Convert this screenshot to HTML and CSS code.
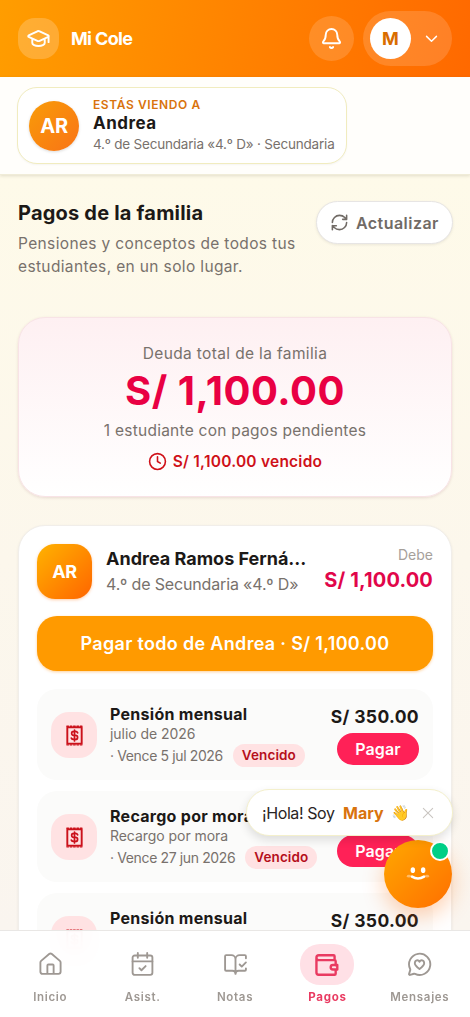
FILE: index.html
```html
<!DOCTYPE html>
<html lang="es">
<head>
<meta charset="utf-8">
<meta name="viewport" content="width=device-width, initial-scale=1">
<title>Mi Cole – Pagos</title>
<link rel="stylesheet" href="styles.css">
</head>
<body>
<svg width="0" height="0" class="defs" aria-hidden="true">
  <symbol id="receipt" viewBox="0 0 24 24">
    <path d="M4.500 3.500h15v17h-15z" fill="none" stroke="currentColor" stroke-width="2"/>
    <path d="M4 2.300h16M4 21.700h16" fill="none" stroke="currentColor" stroke-width="1.400" stroke-dasharray="1.800 1.700"/>
    <path d="M15.300 9.200c-.4-.9-1.300-1.400-2.300-1.400h-1.900a2 2 0 0 0 0 4.100h2a2.100 2.100 0 0 1 0 4.200h-2c-1.100 0-2-.5-2.400-1.400M12 6.300v11.400" fill="none" stroke="currentColor" stroke-width="1.800" stroke-linecap="round"/>
  </symbol>
</svg>
<div class="app">
  <header class="topbar">
    <div class="brand-mark">
      <svg width="23" height="23" viewBox="0 0 24 24"><path d="M10.800 4.500 1.800 8.800a.9.9 0 0 0 0 1.600L10.800 14.500c.8.35 1.600.35 2.400 0L22.200 10.400a.9.9 0 0 0 0-1.600L13.200 4.500a3 3 0 0 0-2.400 0M22.500 9.800v6M5.500 12.500v4.200c0 1.700 2.900 3.100 6.500 3.100s6.500-1.400 6.500-3.100v-4.200"/></svg>
    </div>
    <span class="brand-name">Mi Cole</span>
    <div class="bell">
      <svg width="23" height="23" viewBox="0 0 24 24"><path d="M3.300 15.300A1 1 0 0 0 4 17h16a1 1 0 0 0 .7-1.700C19.400 14 18 12.500 18 8A6 6 0 0 0 6 8c0 4.500-1.400 6-2.700 7.300M10.300 21a2 2 0 0 0 3.400 0"/></svg>
    </div>
    <div class="account">
      <span class="account-avatar">M</span>
      <svg width="17" height="17" viewBox="0 0 24 24"><path d="m5 9 7 7 7-7"/></svg>
    </div>
  </header>

  <section class="viewing">
    <div class="student-chip">
      <span class="chip-avatar">AR</span>
      <div class="chip-text">
        <span class="chip-label">ESTÁS VIENDO A</span>
        <span class="chip-name">Andrea</span>
        <span class="chip-grade">4.º de Secundaria «4.º D» · Secundaria</span>
      </div>
    </div>
  </section>

  <main class="content">
    <div class="page-head">
      <div>
        <h1>Pagos de la familia</h1>
        <p class="intro">Pensiones y conceptos de todos tus<br>estudiantes, en un solo lugar.</p>
      </div>
      <button class="refresh">
        <svg width="19" height="19" viewBox="0 0 24 24"><path d="M3 12a9 9 0 0 1 9-9 9.750 9.750 0 0 1 6.740 2.740L21 8M21 3v5h-5M21 12a9 9 0 0 1-9 9 9.750 9.750 0 0 1-6.740-2.740L3 16M8 16H3v5"/></svg>
        <span>Actualizar</span>
      </button>
    </div>

    <section class="debt">
      <span class="debt-label">Deuda total de la familia</span>
      <span class="debt-total">S/ 1,100.00</span>
      <span class="debt-note">1 estudiante con pagos pendientes</span>
      <span class="debt-due">
        <svg width="19" height="19" viewBox="0 0 24 24"><circle cx="12" cy="12" r="10"/><path d="M12 6v6l3.500 2"/></svg>
        <span>S/ 1,100.00 vencido</span>
      </span>
    </section>

    <section class="student">
      <div class="student-head">
        <span class="student-avatar">AR</span>
        <div class="student-info">
          <span class="student-name">Andrea Ramos Ferná…</span>
          <span class="student-grade">4.º de Secundaria «4.º D»</span>
        </div>
        <div class="owed">
          <span class="owed-label">Debe</span>
          <span class="owed-total">S/ 1,100.00</span>
        </div>
      </div>
      <button class="pay-all"><span>Pagar todo de Andrea · S/ 1,100.00</span></button>

      <article class="fee">
        <span class="fee-icon"><svg width="23" height="23"><use href="#receipt"/></svg></span>
        <div class="fee-info">
          <span class="fee-name">Pensión mensual</span>
          <span class="fee-line">julio de 2026</span>
          <div class="fee-due"><span class="fee-line">· Vence 5 jul 2026</span><span class="badge">Vencido</span></div>
        </div>
        <div class="fee-side"><span class="fee-amount">S/ 350.00</span><button class="pay">Pagar</button></div>
      </article>
      <article class="fee">
        <span class="fee-icon"><svg width="23" height="23"><use href="#receipt"/></svg></span>
        <div class="fee-info">
          <span class="fee-name">Recargo por mora</span>
          <span class="fee-line">Recargo por mora</span>
          <div class="fee-due"><span class="fee-line">· Vence 27 jun 2026</span><span class="badge">Vencido</span></div>
        </div>
        <div class="fee-side"><span class="fee-amount"></span><button class="pay">Pagar</button></div>
      </article>
      <article class="fee">
        <span class="fee-icon"><svg width="23" height="23"><use href="#receipt"/></svg></span>
        <div class="fee-info">
          <span class="fee-name">Pensión mensual</span>
        </div>
        <div class="fee-side"><span class="fee-amount">S/ 350.00</span></div>
      </article>
    </section>
  </main>

  <div class="bot">
    <svg width="24" height="16" viewBox="0 0 28 18">
      <ellipse cx="3.500" cy="11.500" rx="2.500" ry="1.700" fill="#fff" opacity=".4"/><ellipse cx="24.500" cy="11.500" rx="2.500" ry="1.700" fill="#fff" opacity=".4"/>
      <ellipse cx="8" cy="4.500" rx="2.600" ry="3.300" fill="#fff"/><ellipse cx="20" cy="4.500" rx="2.600" ry="3.300" fill="#fff"/>
      <path d="M7 12q7 4.500 14 0" fill="none" stroke="#fff" stroke-width="3" stroke-linecap="round"/>
    </svg>
    <span class="online"></span>
  </div>
  <div class="greeting">
    <span class="hello">¡Hola! Soy</span><strong>Mary</strong><span class="wave">👋</span>
    <svg width="14" height="14" viewBox="0 0 24 24"><path d="M4 4l16 16M20 4 4 20"/></svg>
  </div>

  <nav class="tabs">
    <a class="tab"><span class="tab-icon"><svg width="25" height="25" viewBox="0 0 24 24"><path d="M15 21v-8a1 1 0 0 0-1-1h-4a1 1 0 0 0-1 1v8M2.300 10a2 2 0 0 1 .7-1.500l7.700-6.500a2 2 0 0 1 2.600 0L21 8.500a2 2 0 0 1 .7 1.500v9a2 2 0 0 1-2 2H4.300a2 2 0 0 1-2-2z"/></svg></span><span class="tab-label">Inicio</span></a>
    <a class="tab"><span class="tab-icon"><svg width="25" height="25" viewBox="0 0 24 24"><rect x="2.500" y="3.300" width="19" height="18.700" rx="2"/><path d="M7.500 1v4.500M16.500 1v4.500M2.500 9h19M9 15.500l2 2 4-4"/></svg></span><span class="tab-label">Asist.</span></a>
    <a class="tab"><span class="tab-icon"><svg width="25" height="25" viewBox="0 0 24 24"><path d="M12 21V7M16 12l2 2 4-4M22 6V4a1 1 0 0 0-1-1h-5a4 4 0 0 0-4 4 4 4 0 0 0-4-4H3a1 1 0 0 0-1 1v13a1 1 0 0 0 1 1h6a3 3 0 0 1 3 3 3 3 0 0 1 3-3h6a1 1 0 0 0 1-1v-1.300"/></svg></span><span class="tab-label">Notas</span></a>
    <a class="tab active"><span class="tab-icon"><svg width="26" height="26" viewBox="0 0 24 24"><path d="M19 7.500V4a1 1 0 0 0-1-1H4.500a2.250 2.250 0 0 0 0 4.500H19a1 1 0 0 1 1 1v3.700M2.250 5v14a2 2 0 0 0 2 2H19a1 1 0 0 0 1-1v-3.700M21.500 12h-4a2.100 2.100 0 0 0 0 4.200h4z"/></svg></span><span class="tab-label">Pagos</span></a>
    <a class="tab"><span class="tab-icon"><svg width="25" height="25" viewBox="0 0 24 24"><path d="M3 16.300a1.500 1.500 0 0 1 .1 1.100L2 21a.8.8 0 0 0 1 1l3.700-1.100a1.500 1.500 0 0 1 1 .1A10.200 10.200 0 1 0 3 16.300"/><path d="M7.500 10.800c0-3.200 3.200-3.700 4.500-1.500 1.300-2.200 4.500-1.700 4.500 1.500 0 1.900-2.100 3.700-4.500 5.500-2.400-1.800-4.500-3.600-4.500-5.500z"/></svg></span><span class="tab-label">Mensajes</span></a>
  </nav>
</div>
</body>
</html>
```
FILE: styles.css
```css
* { box-sizing: border-box; }
body { margin: 0; font-family: Inter, "Open Sans", sans-serif; color: #1c1917; }
.defs { position: absolute; }
button { font: inherit; border: 0; padding: 0; }
svg { flex: none; fill: none; stroke: currentColor; stroke-width: 2; stroke-linecap: round; stroke-linejoin: round; }
span { white-space: nowrap; }

.app {
  position: relative; width: 470px; height: 1017px; overflow: hidden;
  background: linear-gradient(180deg, #fefae9 175px, #fcf7ec 560px, #faf5ef 930px);
}

.topbar {
  display: flex; align-items: center; height: 77px; padding: 0 18px; color: #fff;
  background: linear-gradient(100deg, #ff9d00, #ff6900);
}
.brand-mark { display: grid; place-items: center; width: 41px; height: 41px; border-radius: 17px; background: rgba(255,255,255,.2); }
.brand-name { margin-left: 12px; font-size: 18px; font-weight: 700; letter-spacing: -.65px; }
.bell { display: grid; place-items: center; width: 45px; height: 45px; margin-left: auto; border-radius: 50%; background: rgba(255,255,255,.15); }
.account { display: flex; align-items: center; width: 89px; height: 55px; margin-left: 9px; padding: 0 12px 0 7px; border-radius: 28px; background: rgba(255,255,255,.15); justify-content: space-between; }
.account-avatar { display: grid; place-items: center; width: 41px; height: 41px; border-radius: 50%; background: #fff; color: #d96d00; font-size: 18px; font-weight: 700; }

.viewing { height: 98px; padding: 10px 17px; background: #fffefb; border-bottom: 1px solid #f0ecd8; box-shadow: 0 1px 3px rgba(70,60,20,.15); }
.student-chip { display: flex; align-items: center; width: 330px; height: 77px; padding-left: 11px; border: 1.5px solid #f1ecbf; border-radius: 20px; background: #fff; box-shadow: 0 1px 2px rgba(0,0,0,.04); }
.chip-avatar { display: grid; place-items: center; width: 50px; height: 50px; border-radius: 50%; color: #fff; font-size: 20px; font-weight: 700; letter-spacing: -.3px; background: linear-gradient(135deg, #f99c08, #f97316); box-shadow: 0 1px 3px rgba(0,0,0,.15); }
.chip-text { display: flex; flex-direction: column; margin-left: 14px; }
.chip-label { font-size: 12px; line-height: 16px; font-weight: 600; letter-spacing: .6px; color: #d9730d; }
.chip-name { font-size: 17px; line-height: 21px; font-weight: 700; letter-spacing: .5px; }
.chip-grade { font-size: 13.500px; line-height: 20px; letter-spacing: -.2px; color: #78716c; }

.content { padding: 26px 18px 0; }
.page-head { display: flex; justify-content: space-between; height: 116px; }
h1 { margin: 0; font-size: 20px; line-height: 25px; font-weight: 700; letter-spacing: .2px; white-space: nowrap; }
.intro { margin: 6px 0 0; font-size: 15.500px; line-height: 23px; letter-spacing: .36px; color: #78716c; white-space: nowrap; }
.refresh { display: flex; align-items: center; gap: 7px; width: 137px; height: 43px; margin-right: -1px; padding-left: 13px; border: 1px solid #e7e5e4; border-radius: 22px; background: #fff; color: #716b66; font-size: 16px; font-weight: 600; letter-spacing: .45px; box-shadow: 0 1px 3px rgba(0,0,0,.08); }

.debt { display: flex; flex-direction: column; align-items: center; height: 180px; padding-top: 24px; border: 1px solid #f8e3e6; border-radius: 27px; background: linear-gradient(180deg, #fef0f2, #fff); box-shadow: 0 1px 3px rgba(90,20,30,.12); }
.debt-label { font-size: 15.500px; line-height: 23px; letter-spacing: .36px; color: #78716c; }
.debt-total { font-size: 40px; line-height: 52px; font-weight: 700; letter-spacing: .5px; color: #e90043; }
.debt-note { font-size: 15.500px; line-height: 27px; letter-spacing: .25px; color: #78716c; }
.debt-due { display: flex; align-items: center; gap: 6px; margin-top: 4px; font-size: 15.500px; line-height: 27px; font-weight: 600; letter-spacing: .23px; color: #cf1018; }

.student { height: 600px; margin-top: 28px; padding: 18px 18px 0; border: 1px solid #f1eeea; border-radius: 27px; background: #fff; box-shadow: 0 1px 3px rgba(0,0,0,.07); }
.student-head { display: flex; height: 54px; }
.student-avatar { display: grid; place-items: center; width: 55px; height: 55px; border-radius: 18px; color: #fff; font-size: 18px; font-weight: 700; letter-spacing: -.5px; background: linear-gradient(135deg, #ffb300, #ff6500); box-shadow: 0 1px 3px rgba(255,110,0,.35); }
.student-info { display: flex; flex-direction: column; margin-left: 14px; padding-top: 2px; }
.student-name { font-size: 18px; line-height: 26px; font-weight: 700; }
.student-grade { font-size: 16px; line-height: 25px; letter-spacing: -.15px; color: #78716c; }
.owed { display: flex; flex-direction: column; align-items: flex-end; margin-left: auto; margin-top: -1px; }
.owed-label { font-size: 14px; line-height: 23px; color: #a6a09b; }
.owed-total { font-size: 20px; line-height: 28px; font-weight: 700; letter-spacing: .15px; color: #e1064a; }
.pay-all { display: grid; place-items: center; width: 396px; height: 55px; margin-top: 18px; border-radius: 20px; background: #ff9a00; color: #fff; font-size: 18px; font-weight: 600; letter-spacing: .32px; box-shadow: 0 1px 3px rgba(255,140,0,.4); }

.fee { display: flex; width: 396px; height: 91px; margin-top: 18px; padding: 0 14px; border-radius: 20px; background: #fbfbfa; }
.fee + .fee { margin-top: 11px; }
.fee-icon { display: grid; place-items: center; width: 46px; height: 46px; margin-top: 23px; border-radius: 18px; background: #ffe2e3; color: #cb111b; }
.fee-info { display: flex; flex-direction: column; margin-left: 13px; padding-top: 15px; }
.fee-name { font-size: 16px; line-height: 20px; font-weight: 700; letter-spacing: .28px; }
.fee-line { font-size: 14px; line-height: 20px; letter-spacing: -.05px; color: #78716c; }
.fee-due { display: flex; align-items: center; gap: 10px; }
.fee-due .fee-line { letter-spacing: -.37px; }
.badge { height: 23px; padding: 0 9px; border-radius: 12px; background: #ffe2e3; color: #b50f1b; font-size: 13.500px; line-height: 23px; font-weight: 600; letter-spacing: .1px; }
.fee-side { display: flex; flex-direction: column; align-items: flex-end; margin-left: auto; padding-top: 16px; }
.fee-amount { min-height: 24px; font-size: 17.500px; line-height: 24px; font-weight: 700; letter-spacing: .35px; }
.pay { width: 82px; height: 32px; margin-top: 4px; border-radius: 16px; background: #ff2157; color: #fff; font-size: 16px; font-weight: 600; letter-spacing: .1px; }

.tabs { position: absolute; left: 0; right: 0; bottom: 0; height: 87px; display: flex; padding: 13px 4px 0; background: rgba(255,255,255,.95); backdrop-filter: blur(14px); border-top: 1px solid #e9e7e5; }
.tab { display: flex; flex: 1; flex-direction: column; align-items: center; color: #9e9893; }
.tab-icon { display: grid; place-items: center; width: 54px; height: 41px; border-radius: 20px; }
.tab-icon svg { stroke-width: 1.800; }
.tab-label { margin-top: 4px; font-size: 11.500px; line-height: 16px; font-weight: 600; letter-spacing: .7px; }
.active { color: #e93a61; }
.active .tab-icon { background: #ffe0e6; }
.active .tab-icon svg { stroke-width: 2.200; }
.active .tab-label { font-weight: 700; }

.greeting { position: absolute; left: 246px; top: 789px; display: flex; align-items: center; width: 207px; height: 47px; padding-left: 15px; border: 1px solid #f4f0cc; border-radius: 23px; background: #fff; font-size: 16px; box-shadow: 0 4px 10px rgba(0,0,0,.12); }
.hello { width: 72px; letter-spacing: -.4px; color: #292524; }
.greeting strong { width: 40px; margin-left: 9px; color: #d9730d; }
.wave { width: 20px; margin-left: 8px; font-size: 15px; }
.greeting svg { margin-left: 10px; color: #c9c5c1; stroke-width: 1.800; }
.bot { position: absolute; left: 384px; top: 840px; display: grid; place-items: center; width: 68px; height: 68px; border-radius: 50%; background: linear-gradient(135deg, #ffa800, #ff6f00); box-shadow: 0 8px 22px rgba(255,105,0,.32); }
.bot svg { stroke: none; }
.online { position: absolute; right: 2px; top: 1px; width: 20px; height: 20px; border: 2.500px solid #fff; border-radius: 50%; background: #00cf86; }
```
